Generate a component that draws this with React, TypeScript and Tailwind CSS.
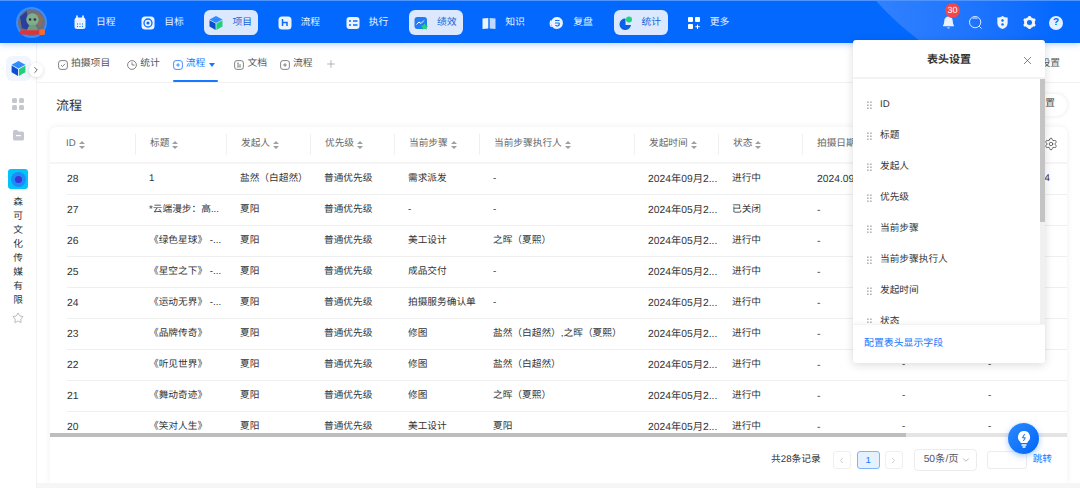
import { ChevronDown, ChevronLeft, ChevronRight, Plus, Settings, Star, X } from 'lucide-react';
import type { ReactNode } from 'react';

const Cube = ({ size = 16 }: { size?: number }) => (
  <svg width={size} height={size} viewBox="0 0 16 16">
    <path d="M8 1 14.5 4.5 8 8 1.5 4.5Z" fill="#2f8bff" />
    <path d="M1.5 5.2 7.6 8.6V15L1.5 11.6Z" fill="#0b4fd0" />
    <path d="M14.5 5.2 8.4 8.6V15L14.5 11.6Z" fill="#22d07a" />
  </svg>
);

const navIcon = (body: ReactNode) => (
  <svg width="16" height="16" viewBox="0 0 16 16">
    {body}
  </svg>
);

const icons = {
  calendar: navIcon(
    <>
      <path d="M5 1v3M11 1v3" stroke="#fff" strokeWidth="1.5" strokeLinecap="round" />
      <rect x="2.5" y="2.5" width="11" height="11.5" rx="2.5" fill="#fff" fillOpacity="0.9" />
      <path d="M5 9h1M7.5 9h1M10 9h1M5 11.5h1M7.5 11.5h1M10 11.5h1" stroke="#0a6bff" strokeWidth="1" />
    </>,
  ),
  target: navIcon(
    <>
      <rect x="1.5" y="1.5" width="13" height="13" rx="3.5" fill="#fff" fillOpacity="0.92" />
      <circle cx="8" cy="8" r="4" fill="none" stroke="#0a6bff" strokeWidth="1.3" />
      <circle cx="8" cy="8" r="1.6" fill="#0a6bff" />
    </>,
  ),
  flow: navIcon(
    <>
      <rect x="1.5" y="1.5" width="13" height="13" rx="3.5" fill="#fff" fillOpacity="0.92" />
      <path d="M5.5 4v7M5.5 7.5h4.5v3.5" fill="none" stroke="#0a6bff" strokeWidth="1.5" />
    </>,
  ),
  exec: navIcon(
    <>
      <rect x="1.5" y="2" width="13" height="12" rx="3" fill="#fff" fillOpacity="0.92" />
      <path d="M4 6h2M8 6h4.5M4 10h2M8 10h4.5" stroke="#0a6bff" strokeWidth="1.4" />
    </>,
  ),
  perf: navIcon(
    <>
      <rect x="1.5" y="2" width="12.5" height="12" rx="3" fill="#1f7cf5" />
      <path d="M3.5 9.5 6 7l2 1.5L11 5.5" fill="none" stroke="#fff" strokeWidth="1" />
      <path d="M11.5 8.2 13 10.8l2 .3-1.5 1.6.4 2.1-2.4-1-2.4 1 .4-2.1L8 11.1l2-.3Z" fill="#1fd37f" />
    </>,
  ),
  book: navIcon(
    <>
      <path d="M1.5 3.5 7.3 3v10.5l-5.8.5Z" fill="#fff" fillOpacity="0.92" />
      <path d="M14.5 3.5 8.7 3v10.5l5.8.5Z" fill="#fff" fillOpacity="0.75" />
    </>,
  ),
  review: navIcon(
    <>
      <path d="M4 3.5A6 6 0 1 1 3.4 12 6 6 0 0 1 4 3.5Z" fill="#fff" fillOpacity="0.92" />
      <path d="M2 5.5A6 6 0 0 0 2.5 12" fill="none" stroke="#fff" strokeWidth="1.2" />
      <path d="M6 5.5h4.5M6 8h4a2 2 0 0 1-3.5 2" fill="none" stroke="#0a6bff" strokeWidth="1.2" />
    </>,
  ),
  stats: navIcon(
    <>
      <path d="M7.5 3.5a5.8 5.8 0 1 0 5.5 6.5H7.5Z" fill="#0a5fe8" />
      <circle cx="11" cy="4.5" r="3" fill="#1fd37f" />
    </>,
  ),
  more: navIcon(
    <>
      <rect x="2" y="2" width="5" height="5" rx="1" fill="#fff" />
      <rect x="9" y="2" width="5" height="5" rx="1" fill="#fff" />
      <rect x="2" y="9" width="5" height="5" rx="1" fill="#fff" />
      <path d="M11.5 9.5v4.5M9.3 11.7h4.5" stroke="#fff" strokeWidth="1" />
    </>,
  ),
};

const navItems = [
  { label: '日程', icon: icons.calendar },
  { label: '目标', icon: icons.target },
  { label: '项目', icon: <Cube />, active: true },
  { label: '流程', icon: icons.flow },
  { label: '执行', icon: icons.exec },
  { label: '绩效', icon: icons.perf, active: true },
  { label: '知识', icon: icons.book },
  { label: '复盘', icon: icons.review },
  { label: '统计', icon: icons.stats, active: true },
  { label: '更多', icon: icons.more },
];

const TabIcon = ({ kind, color = '#666' }: { kind: 'check' | 'clock' | 'plus' | 'doc'; color?: string }) => (
  <svg width="10" height="10" viewBox="0 0 10 10" fill="none" stroke={color} strokeWidth="0.8">
    {kind === 'clock' ? <circle cx="5" cy="5" r="4.4" /> : <rect x="0.6" y="0.6" width="8.8" height="8.8" rx="2.4" />}
    {kind === 'check' && <path d="M3 5l1.5 1.5L7 3.8" />}
    {kind === 'clock' && <path d="M5 2.4V5h2.6" />}
    {kind === 'plus' && <path d="M5 3.2v3.6M3.2 5h3.6" />}
    {kind === 'doc' && <path d="M3 3.2h2M3 5h4M3 6.8h4" />}
  </svg>
);

const tabs = [
  { label: '拍摄项目', kind: 'check' as const, gap: 'mr-[17px]' },
  { label: '统计', kind: 'clock' as const, gap: 'mr-[13px]' },
  { label: '流程', kind: 'plus' as const, active: true, gap: 'mr-[19px]' },
  { label: '文档', kind: 'doc' as const, gap: 'mr-[13px]' },
  { label: '流程', kind: 'plus' as const, gap: 'mr-[12px]' },
];

const SortIcon = () => (
  <svg width="6" height="8" viewBox="0 0 6 8" className="ml-[3px] shrink-0" fill="#9aa0a6">
    <path d="M3 0 6 3H0ZM3 8 0 5H6Z" />
  </svg>
);

const columns = [
  { label: 'ID', w: 'w-[86px]', pl: 'pl-[16px]' },
  { label: '标题', w: 'w-[91px]', pl: 'pl-[14px]' },
  { label: '发起人', w: 'w-[84px]', pl: 'pl-[14px]' },
  { label: '优先级', w: 'w-[84px]', pl: 'pl-[14px]' },
  { label: '当前步骤', w: 'w-[85px]', pl: 'pl-[14px]' },
  { label: '当前步骤执行人', w: 'w-[155px]', pl: 'pl-[14px]' },
  { label: '发起时间', w: 'w-[84px]', pl: 'pl-[14px]' },
  { label: '状态', w: 'w-[84px]', pl: 'pl-[14px]' },
  { label: '拍摄日期', w: 'w-[84px]', pl: 'pl-[14px]' },
  { label: '拍摄地点', w: 'w-[84px]', pl: 'pl-[14px]' },
];

const rows = [
  ['28', '1', '盐然（白超然）', '需求派发', '-', '2024年09月2...', '进行中', '2024.09.24', '-', '2024.09.24 14'],
  ['27', '*云端漫步：高...', '夏阳', '-', '-', '2024年05月2...', '已关闭', '-', '-', '-'],
  ['26', '《绿色星球》 -...', '夏阳', '美工设计', '之晖（夏熙）', '2024年05月2...', '进行中', '-', '-', '-'],
  ['25', '《星空之下》 -...', '夏阳', '成品交付', '-', '2024年05月2...', '进行中', '-', '-', '-'],
  ['24', '《运动无界》 -...', '夏阳', '拍摄服务确认单', '-', '2024年05月2...', '进行中', '-', '-', '-'],
  ['23', '《品牌传奇》', '夏阳', '修图', '盐然（白超然）,之晖（夏熙）', '2024年05月2...', '进行中', '-', '-', '-'],
  ['22', '《听见世界》', '夏阳', '修图', '盐然（白超然）', '2024年05月2...', '进行中', '-', '-', '-'],
  ['21', '《舞动奇迹》', '夏阳', '修图', '之晖（夏熙）', '2024年05月2...', '进行中', '-', '-', '-'],
  ['20', '《笑对人生》', '夏阳', '美工设计', '夏阳', '2024年05月2...', '进行中', '-', '-', '-'],
];

const headerFields = ['ID', '标题', '发起人', '优先级', '当前步骤', '当前步骤执行人', '发起时间', '状态'];

const DragDots = () => (
  <svg width="5" height="9" viewBox="0 0 5 9" fill="#8c8c8c">
    {[0.5, 3.5, 6.5].map((y) => (
      <g key={y}>
        <rect x="0.3" y={y} width="1.2" height="1.4" />
        <rect x="3.3" y={y} width="1.2" height="1.4" />
      </g>
    ))}
  </svg>
);

function TopBar() {
  return (
    <header className="relative h-[43px] shrink-0 border-t border-[#4d94ff] bg-[#0268fe] flex items-center z-10 shadow-[0_2px_6px_rgba(2,104,254,0.25)]">
      <div className="absolute inset-0 overflow-hidden">
        <div className="absolute left-[804px] top-[-476px] w-[572px] h-[572px] rounded-full bg-gradient-to-r from-[#3e8aff] to-[#0268fe] to-[45%]" />
      </div>
      <div className="relative ml-[16px] w-[31px] h-[31px] rounded-full bg-[#3f8df5] p-[2px] shrink-0">
        <svg viewBox="0 0 28 28" className="w-full h-full">
          <circle cx="14" cy="14" r="14" fill="#6b6f80" />
          <path d="M2 8 9 2l3 20-8-2Z" fill="#2a3f9c" />
          <path d="M20 3l6 6-3 10-4-4Z" fill="#8a6f60" />
          <circle cx="15" cy="11" r="6.5" fill="#7fae8e" />
          <path d="M9 25c0-6 3-9 6-9s6 3 6 9Z" fill="#6f9c80" />
          <circle cx="12.5" cy="11" r="1.3" fill="#263238" />
          <circle cx="17.5" cy="11" r="1.3" fill="#263238" />
          <rect x="2" y="22" width="21" height="4.5" rx="2" fill="#e5303a" />
          <rect x="22" y="21" width="6" height="6" rx="1.5" fill="#f36a2d" />
        </svg>
      </div>
      <nav className="relative ml-[21px] pt-[1px] flex gap-[14.2px]">
        {navItems.map((item) => (
          <div
            key={item.label}
            className={`w-[54px] h-[25px] pl-[4px] flex items-center gap-[4px] rounded-[6px] ${
              item.active ? 'bg-[#dbe8fd] text-[#1262d6]' : 'text-[#eaf2ff]'
            }`}
          >
            {item.icon}
            <span className="ml-[4px] mt-[1px] text-[9.8px] whitespace-nowrap">{item.label}</span>
          </div>
        ))}
      </nav>
      <div className="relative ml-auto mr-[17px] pt-[1px] flex items-center gap-[12px] text-white">
        <div className="relative">
          <svg width="15" height="15" viewBox="0 0 16 16" fill="#fff" fillOpacity="0.9">
            <path d="M8 1.500a4.500 4.500 0 0 0-4.500 4.500c0 3.500-1.500 5-1.500 6h12c0-1-1.500-2.500-1.500-6A4.500 4.500 0 0 0 8 1.500ZM6.300 13.200a1.800 1.800 0 0 0 3.400 0Z" />
          </svg>
          <span className="absolute left-[4px] top-[-12px] w-[15px] h-[15px] rounded-full bg-[#f0474a] text-white text-[9px] flex items-center justify-center">
            30
          </span>
        </div>
        <svg width="15" height="15" viewBox="0 0 16 16" fill="none" stroke="#fff" strokeWidth="0.9">
          <circle cx="7.6" cy="7.6" r="6" />
          <path d="M12 12l2.500 2.500M5 3.800c1.500-.8 3.500-.8 5 0" />
        </svg>
        <svg width="15" height="15" viewBox="0 0 16 16">
          <path d="M8 1c2 1.200 3.500 1.500 5.500 1.700v6C13.500 12 11 14 8 15c-3-1-5.500-3-5.500-6.300v-6C4.500 2.500 6 2.200 8 1Z" fill="#fff" fillOpacity="0.92" />
          <circle cx="8" cy="5.800" r="1.300" fill="#0268fe" />
          <circle cx="8" cy="10" r="1.300" fill="#0268fe" />
        </svg>
        <svg width="15" height="15" viewBox="0 0 16 16" fill="none">
          <circle cx="8" cy="8" r="4.300" stroke="#fff" strokeWidth="3.200" strokeOpacity="0.92" />
          <path d="M8 1v2.500M8 12.500V15M1.900 4.500l2.200 1.300M11.900 10.200l2.200 1.300M1.900 11.500l2.200-1.300M11.900 5.800l2.200-1.300" stroke="#fff" strokeWidth="2.600" strokeOpacity="0.92" />
        </svg>
        <div className="w-[14px] h-[14px] rounded-full bg-white/90 text-[#0268fe] text-[10px] font-bold flex items-center justify-center">
          ?
        </div>
      </div>
    </header>
  );
}

function SideRail() {
  return (
    <aside className="relative w-[37px] shrink-0 border-r border-[#f2f2f2] flex flex-col items-center">
      <div className="mt-[13px] w-[25px] h-[25px] rounded-[6px] bg-[#f1f6fe] flex items-center justify-center">
        <Cube size={17} />
      </div>
      <div className="absolute left-[29px] top-[20px] w-[14px] h-[14px] rounded-full bg-white shadow-[0_1px_4px_rgba(0,0,0,0.15)] flex items-center justify-center z-10">
        <ChevronRight size={10} color="#444" />
      </div>
      <div className="mt-[17px] grid grid-cols-2 gap-[2px]">
        <span className="w-[5px] h-[5px] rounded-[1.5px] bg-[#c4c8ce]" />
        <span className="w-[5px] h-[5px] rounded-[1.5px] bg-[#c4c8ce]" />
        <span className="w-[5px] h-[5px] rounded-[1.5px] bg-[#c4c8ce]" />
        <span className="w-[5px] h-[5px] rounded-[1.5px] bg-[#c4c8ce]" />
      </div>
      <svg width="13" height="12" viewBox="0 0 13 12" className="mt-[19px]">
        <path d="M1 2.500A1.500 1.500 0 0 1 2.500 1h2.500l1.500 1.500h4A1.500 1.500 0 0 1 12 4v6a1.500 1.500 0 0 1-1.500 1.500h-8A1.500 1.500 0 0 1 1 10Z" fill="#c4c8ce" />
        <rect x="4" y="6" width="5" height="1.200" fill="#fff" />
      </svg>
      <div className="mt-[28px] w-[20px] h-[20px] rounded-[3px] bg-[#02c3fb] flex items-center justify-center">
        <div className="w-[15px] h-[15px] rounded-full bg-[#1f8bf5] flex items-center justify-center">
          <div className="w-[7px] h-[7px] rounded-full bg-[#3b34d6]" />
        </div>
      </div>
      <div className="mt-[7px] w-[14px] text-[9.7px] leading-[14px] text-[#333] text-center">
        {'森可文化传媒有限'.split('').map((ch, i) => (
          <div key={i}>{ch}</div>
        ))}
      </div>
      <Star size={12} color="#777" strokeWidth={1} className="mt-[4px]" />
    </aside>
  );
}

function TabBar() {
  return (
    <div className="h-[40px] shrink-0 border-b border-[#f2f2f2] pl-[21px] flex items-stretch text-[9.8px] text-[#555]">
      {tabs.map((tab, i) => (
        <div
          key={i}
          className={`relative pt-[4px] flex items-center gap-[3px] whitespace-nowrap ${tab.gap} ${tab.active ? 'text-[#1677ff]' : ''}`}
        >
          <TabIcon kind={tab.kind} color={tab.active ? '#1677ff' : '#666'} />
          <span>{tab.label}</span>
          {tab.active && (
            <svg width="6" height="4" viewBox="0 0 6 4" className="ml-[1px]" fill="#1677ff">
              <path d="M0 0h6L3 4Z" />
            </svg>
          )}
          {tab.active && <div className="absolute left-0 right-[-3px] bottom-0 h-[2px] rounded-[1px] bg-[#1677ff]" />}
        </div>
      ))}
      <div className="pt-[3px] flex items-center">
        <Plus size={12} color="#888" strokeWidth={1.2} />
      </div>
      <div className="ml-auto mr-[20px] pt-[4px] flex items-center">设置</div>
    </div>
  );
}

function DataTable() {
  return (
    <div className="mx-[13px] flex-1 min-h-0 rounded-t-[6px] bg-white shadow-[0_0_6px_rgba(0,0,0,0.07)] flex flex-col">
      <div className="h-[306px] shrink-0 overflow-hidden">
        <div className="h-[37px] flex items-center border-b-[2px] border-[#f5f5f5] text-[9.7px] text-[#666]">
          {columns.map((col) => (
            <div key={col.label} className={`${col.w} ${col.pl} shrink-0 h-[21px] flex items-center border-r border-[#f0f0f0] whitespace-nowrap`}>
              {col.label}
              <SortIcon />
            </div>
          ))}
          <div className="flex-1 flex justify-end pr-[9px] pb-[1px]">
            <Settings size={14} color="#333" strokeWidth={1.2} />
          </div>
        </div>
        {rows.map((row) => (
          <div key={row[0]} className="ml-[17px] h-[31px] shrink-0 pt-[1px] flex items-center border-b border-[#efefef] text-[9.7px] text-[#333] whitespace-nowrap">
            <div className="w-[69px] shrink-0 text-[10.3px]">{row[0]}</div>
            <div className="w-[91px] shrink-0 pl-[13px]">{row[1]}</div>
            <div className="w-[84px] shrink-0 pl-[13px]">{row[2]}</div>
            <div className="w-[84px] shrink-0 pl-[13px]">普通优先级</div>
            <div className="w-[85px] shrink-0 pl-[13px]">{row[3]}</div>
            <div className="w-[155px] shrink-0 pl-[13px]">{row[4]}</div>
            <div className="w-[84px] shrink-0 pl-[13px] text-[10.3px]">{row[5]}</div>
            <div className="w-[84px] shrink-0 pl-[13px]">{row[6]}</div>
            <div className="w-[84px] shrink-0 pl-[14px] text-[10.3px]">{row[7]}</div>
            <div className="w-[84px] shrink-0 pl-[15px]">{row[8]}</div>
            <div className="pl-[17px]">{row[9]}</div>
          </div>
        ))}
      </div>
      <div className="h-[4px] shrink-0 bg-[#e4e4e4]">
        <div className="h-full w-[856px] bg-[#bdbdbd]" />
      </div>
      <div className="flex-1 flex items-center pr-[15px] text-[9.7px] text-[#333]">
        <span className="ml-auto mr-[12px]">共28条记录</span>
        <button className="w-[18px] h-[18px] rounded-[3px] border border-[#efefef] flex items-center justify-center">
          <ChevronLeft size={9} color="#bbb" />
        </button>
        <button className="ml-[6px] w-[23px] h-[18px] rounded-[3px] border border-[#7db4fa] bg-[#e6f1fe] text-[#1677ff]">1</button>
        <button className="ml-[5px] w-[18px] h-[18px] rounded-[3px] border border-[#efefef] flex items-center justify-center">
          <ChevronRight size={9} color="#bbb" />
        </button>
        <div className="ml-[11px] w-[63px] h-[22px] rounded-[4px] border border-[#ececec] pl-[9px] pr-[5px] flex items-center justify-between text-[10.3px] text-[#555]">
          50条/页
          <ChevronDown size={10} color="#aaa" />
        </div>
        <div className="ml-[10px] w-[40px] h-[18px] rounded-[3px] border border-[#ececec]" />
        <span className="ml-[6px] text-[#1677ff]">跳转</span>
      </div>
    </div>
  );
}

function HeaderSettingsPopover() {
  return (
    <div className="absolute left-[853px] top-[40px] z-20 w-[192px] h-[323px] bg-white rounded-[3px] shadow-[0_2px_10px_rgba(0,0,0,0.14)] flex flex-col">
      <div className="relative h-[39px] shrink-0 pt-[3px] border-b-[2px] border-[#f3f3f3] flex items-center justify-center text-[11px] font-bold text-[#333]">
        表头设置
        <X size={13} color="#444" strokeWidth={1.2} className="absolute right-[11px] top-[14px]" />
      </div>
      <div className="relative flex-1 min-h-0 overflow-hidden pt-[11px]">
        {headerFields.map((field) => (
          <div key={field} className="h-[31px] pl-[14px] flex items-center gap-[8px] text-[9.7px] text-[#333]">
            <DragDots />
            {field}
          </div>
        ))}
        <div className="absolute right-0 top-0 bottom-0 w-[5px] bg-[#f0f0f0]">
          <div className="h-[143px] bg-[#c4c4c4]" />
        </div>
      </div>
      <div className="h-[39px] shrink-0 border-t border-[#f3f3f3] shadow-[0_-2px_4px_rgba(0,0,0,0.03)] pl-[11px] flex items-center text-[9.9px] text-[#1677ff]">
        配置表头显示字段
      </div>
    </div>
  );
}

export default function App() {
  return (
    <div
      className="relative w-[1080px] h-[488px] overflow-hidden bg-white flex flex-col [text-rendering:geometricPrecision]"
      style={{ fontFamily: '"Liberation Sans", "Noto Sans CJK SC", sans-serif' }}
    >
      <TopBar />
      <div className="flex-1 min-h-0 flex">
        <SideRail />
        <main className="flex-1 min-w-0 flex flex-col pb-[5px] bg-white">
          <TabBar />
          <div className="h-[44px] shrink-0 pt-[1px] pl-[19px] pr-[13px] flex items-center justify-between">
            <h1 className="text-[13px] text-[#333]">流程</h1>
            <div className="w-[60px] h-[22px] mt-[-2px] rounded-full bg-white shadow-[0_0_4px_rgba(0,0,0,0.1)] pr-[12px] flex items-center justify-end text-[9.7px] text-[#444]">
              表头设置
            </div>
          </div>
          <DataTable />
        </main>
      </div>
      <div className="absolute left-[37px] right-0 bottom-0 h-[5px] bg-[#f6f6f6]" />
      <HeaderSettingsPopover />
      <div className="absolute left-[1008px] top-[423px] z-30 w-[31px] h-[31px] rounded-full bg-gradient-to-br from-[#2a8bff] to-[#0063f5] shadow-[0_2px_6px_rgba(2,104,254,0.35)] flex items-center justify-center">
        <svg width="16" height="18" viewBox="0 0 16 18">
          <path d="M8 1a6 6 0 0 0-3.500 10.900V13h7v-1.100A6 6 0 0 0 8 1Z" fill="#fff" />
          <path d="M5.500 15h5M6.500 17h3" stroke="#fff" strokeWidth="1.300" />
          <path d="M8.600 4 6.500 7.800h2.800L7.400 11" fill="none" stroke="#0a6bff" strokeWidth="1" />
        </svg>
      </div>
    </div>
  );
}
